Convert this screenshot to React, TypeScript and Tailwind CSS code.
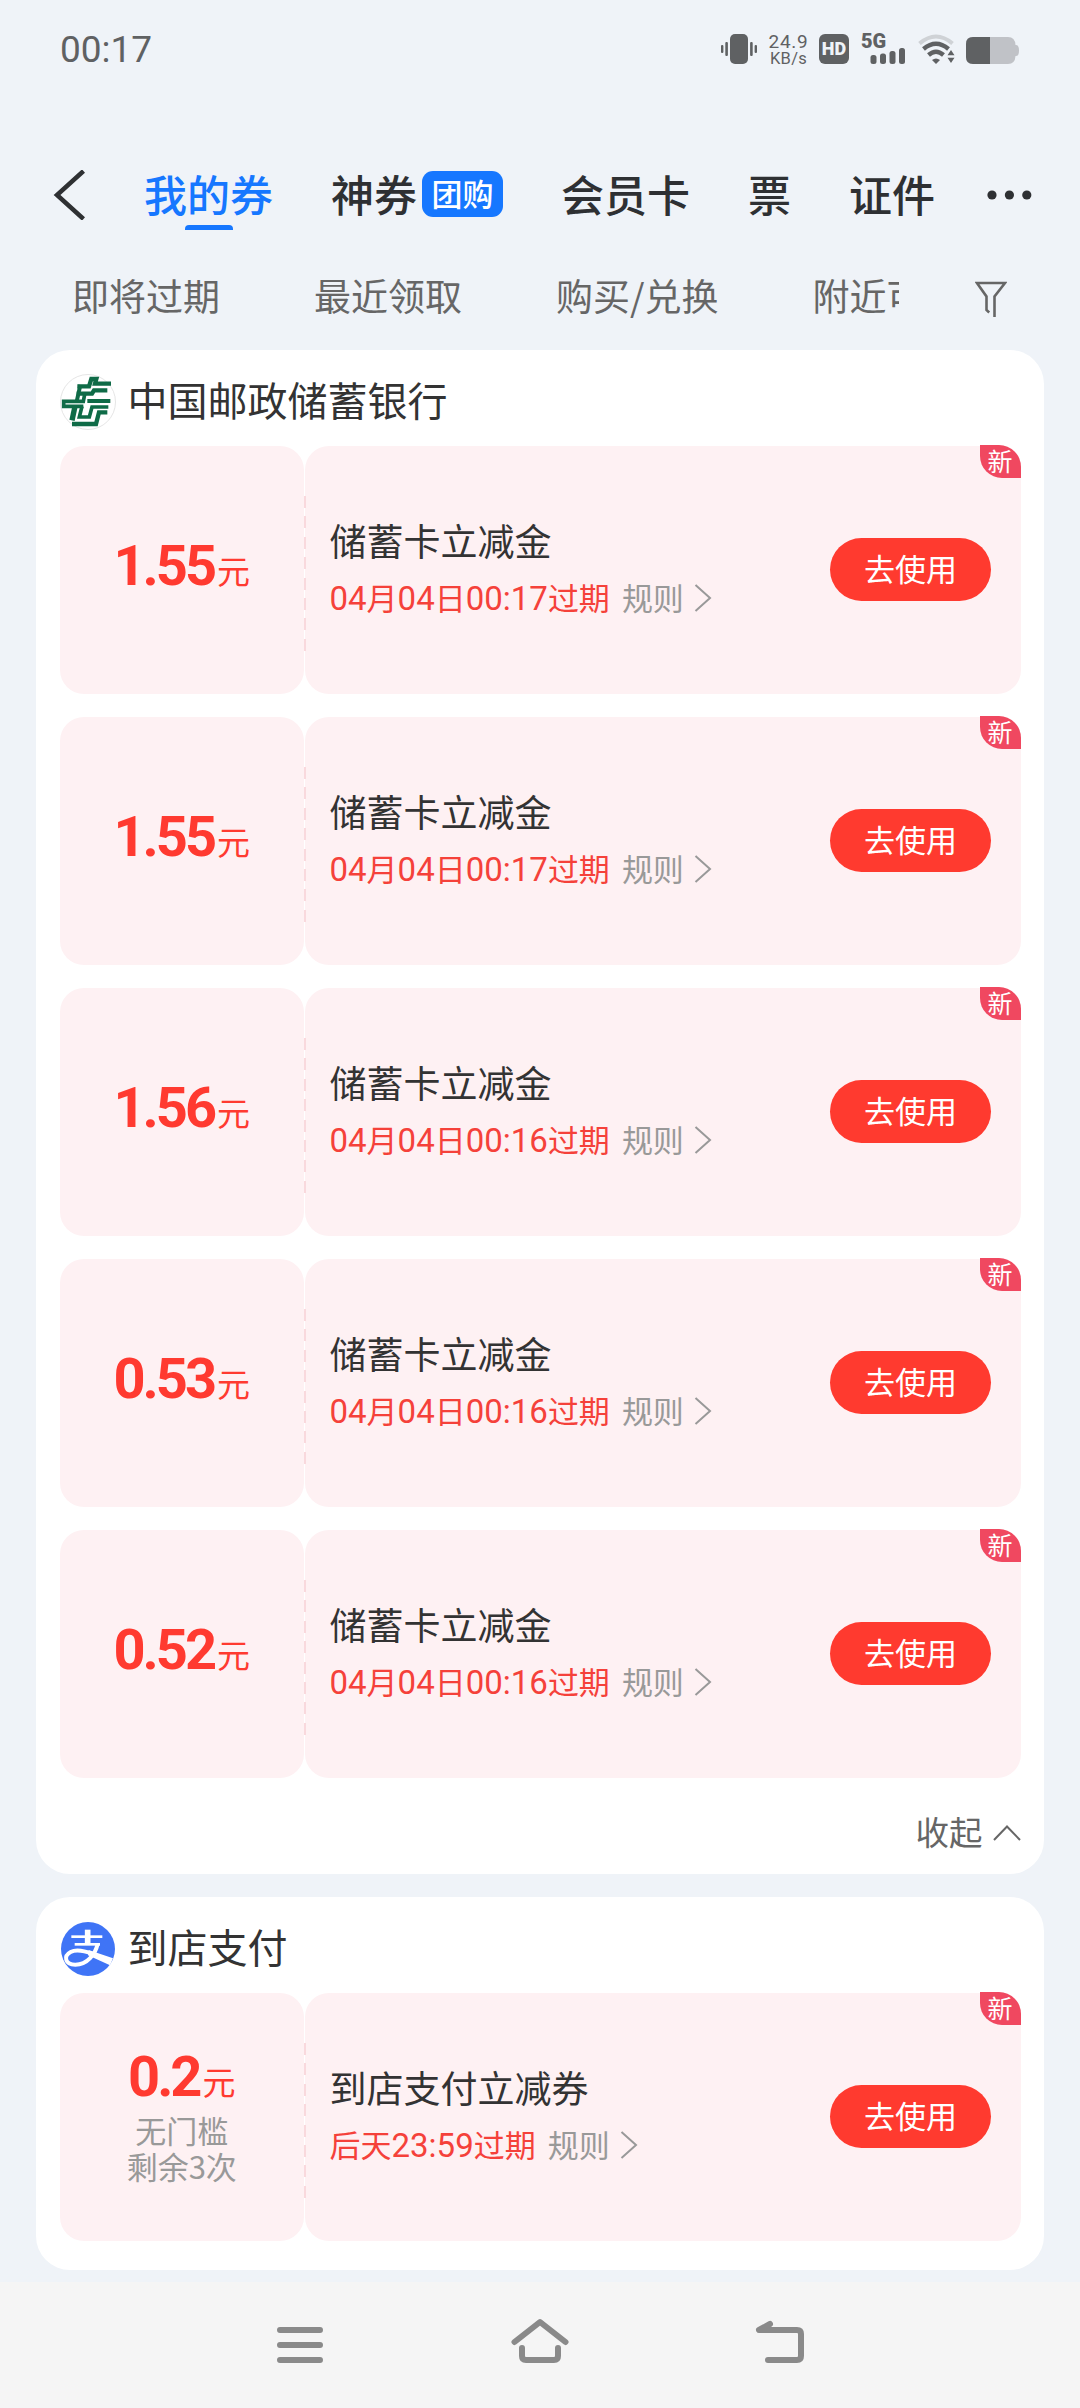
import React from 'react'

interface Coupon {
  id: number
  amount: string
  title: string
  expire: string
  notes?: string[]
}

const bankCoupons: Coupon[] = [
  { id: 1, amount: '1.55', title: '储蓄卡立减金', expire: '04月04日00:17过期' },
  { id: 2, amount: '1.55', title: '储蓄卡立减金', expire: '04月04日00:17过期' },
  { id: 3, amount: '1.56', title: '储蓄卡立减金', expire: '04月04日00:16过期' },
  { id: 4, amount: '0.53', title: '储蓄卡立减金', expire: '04月04日00:16过期' },
  { id: 5, amount: '0.52', title: '储蓄卡立减金', expire: '04月04日00:16过期' },
]

const storeCoupons: Coupon[] = [
  { id: 6, amount: '0.2', title: '到店支付立减券', expire: '后天23:59过期', notes: ['无门槛', '剩余3次'] },
]

function StatusBar() {
  return (
    <div className="flex h-[98px] items-center pl-[60px] pr-[61px] text-[#5f6163] font-['Roboto']">
      <span className="text-[37px] leading-none">00:17</span>
      <div className="ml-auto flex h-[30px] items-end">
        {/* Vibrate */}
        <svg width="36" height="30" viewBox="0 0 36 30" fill="currentColor">
          <rect x="9" width="18" height="30" rx="5" />
          <rect x="4.3" y="8" width="2.6" height="14" rx="1" />
          <rect x="29.1" y="8" width="2.6" height="14" rx="1" />
          <rect x="0" y="11" width="2.4" height="8" rx="1" />
          <rect x="33.6" y="11" width="2.4" height="8" rx="1" />
        </svg>
        <div className="ml-[11px] flex h-[34px] w-[41px] translate-y-[3px] flex-col items-center whitespace-nowrap">
          <span className="text-[19px] leading-[18px] tracking-[0.7px]">24.9</span>
          <span className="text-[16.5px] leading-[16px] tracking-[0.3px]">KB/s</span>
        </div>
        <div className="ml-[10px] flex h-[30px] w-[30px] items-center justify-center rounded-[6px] bg-[#5f6163] text-[18px] font-black leading-none text-[#eff3f8]">
          HD
        </div>
        <div className="relative ml-[12px] h-[30px] w-[45px]">
          <span className="absolute left-0 top-0 text-[20px] font-black leading-[14px]">5G</span>
          <svg className="absolute bottom-0 right-0" width="36" height="17" viewBox="0 0 36 17" fill="currentColor">
            <rect x="0.5" y="8" width="6" height="9" rx="2.5" />
            <rect x="10" y="6.5" width="6" height="10.5" rx="2.5" />
            <rect x="19.5" y="4" width="6" height="13" rx="2.5" />
            <rect x="29" y="1" width="6" height="16" rx="2.5" />
          </svg>
        </div>
        <svg className="ml-[12px]" width="37" height="30" viewBox="0 0 37 30" fill="none" stroke="currentColor">
          <path d="M1.5 9.5 Q18 -4.5 34.5 9.5" strokeWidth="4" stroke="#cfd2d6" />
          <path d="M5.5 15 Q18 4.5 30.5 15" strokeWidth="4.4" />
          <path d="M10.5 21 Q18 14.5 25.5 21" strokeWidth="4.4" />
          <path d="M14 26 Q18 23 22 26 L18 30 Z" fill="currentColor" stroke="none" />
          <path d="M33 16 L36.5 21.3 H29.5 Z M33 29 L36.5 23.7 H29.5 Z" fill="currentColor" stroke="none" />
        </svg>
        <svg className="ml-[11px]" width="53" height="27" viewBox="0 0 53 27">
          <path d="M7 0 H42 Q49 0 49.5 8 H50 Q53 8 53 13.5 T50 19 H49.5 Q49 27 42 27 H7 Q0 27 0 20 V7 Q0 0 7 0 Z" fill="#c0c2c7" />
          <path d="M7 0 H24 V27 H7 Q0 27 0 20 V7 Q0 0 7 0 Z" fill="#5f6163" />
        </svg>
      </div>
    </div>
  )
}

function TabBar() {
  return (
    <div className="flex h-[66px] items-center pl-[53px] text-[43px] font-medium leading-[62px] text-[#2e3033]">
      <svg width="32" height="50" viewBox="0 0 32 50" fill="none" stroke="#2e3033" strokeWidth="4.5">
        <path d="M30.5 1 L4 25 L30.5 49" />
      </svg>
      <div className="relative ml-[59px] pb-1 text-[#1677ff]">
        我的券
        <div className="absolute bottom-[-2px] left-[41px] h-[5px] w-[48px] rounded-t-[4px] bg-[#1677ff]" />
      </div>
      <div className="ml-[58px] flex items-center">
        <span className="pb-1">神券</span>
        <span className="-mt-[2px] ml-[5px] flex h-[46px] w-[81px] items-center justify-center rounded-[11px] bg-[#1677ff] pb-[3px] text-[31px] leading-[43px] text-white">
          团购
        </span>
      </div>
      <div className="ml-[58px] pb-1">会员卡</div>
      <div className="ml-[58px] pb-1">票</div>
      <div className="ml-[58px] pb-1">证件</div>
      <svg className="ml-[52px]" width="45" height="10" viewBox="0 0 45 10" fill="#2e3033">
        <circle cx="5" cy="5" r="4.6" />
        <circle cx="22.4" cy="5" r="4.6" />
        <circle cx="39.8" cy="5" r="4.6" />
      </svg>
    </div>
  )
}

function FilterBar() {
  return (
    <div className="mt-[34px] flex h-[67px] items-center text-[37px] leading-[67px] text-[#666]">
      <div className="flex w-[899px] gap-[94px] overflow-hidden whitespace-nowrap pl-[72px]">
        <span>即将过期</span>
        <span>最近领取</span>
        <span>购买/兑换</span>
        <span>附近可用</span>
      </div>
      <svg className="ml-[76px] mt-[7px]" width="32" height="38" viewBox="0 0 32 38" fill="none" stroke="#666" strokeWidth="2.6">
        <path d="M14.2 32.5 L11.5 30 V16.5 L2 3 H30 L19.5 16.5 V37" />
      </svg>
    </div>
  )
}

function PostBankLogo() {
  return (
    <svg width="56" height="56" viewBox="10 9 168 168">
      <circle cx="94" cy="93" r="82.5" fill="#fff" stroke="#d8d8d8" strokeWidth="2" />
      <g fill="none" stroke="#0f6b47" strokeWidth="13">
        <path d="M62 46 H97 L104 24 H119 L115 38 H163" />
        <path d="M71 42 L60 92" strokeWidth="12" />
        <path d="M60 68 H106 L112 58 H152" />
        <path d="M84 70 L80 91 H21 V106 H80" strokeWidth="11" />
        <path d="M55 106 L46 148" strokeWidth="16" />
        <path d="M76 106 L68 138 H98 L106 108 H155" strokeWidth="11" />
        <path d="M92 90 H161" strokeWidth="12" />
        <path d="M46 159 H118 L127 124 H152" />
      </g>
    </svg>
  )
}

function AlipayLogo() {
  return (
    <svg width="56" height="56" viewBox="10 9 168 168">
      <circle cx="94" cy="93" r="81" fill="#3f74f6" />
      <g fill="none" stroke="#fff">
        <path d="M44 56 H137" strokeWidth="8" />
        <path d="M54 79 H130" strokeWidth="8" />
        <path d="M93 35 V79" strokeWidth="17" />
        <path d="M123 78 C116 108 92 140 56 140 C24 140 20 114 42 102 C58 94 84 99 108 108" strokeWidth="12" />
      </g>
      <path d="M96 96 L169 121 L160 142 L94 112 Z" fill="#fff" />
    </svg>
  )
}

function CouponCard({ coupon }: { coupon: Coupon }) {
  // Latin digits sit a little larger than the Chinese characters around them
  const parts = coupon.expire.split(/([\d:]+)/)

  return (
    <div className="relative flex h-[247.5px] gap-px">
      <div className="flex w-[244.5px] flex-col items-center justify-center rounded-[24px] bg-[#fef1f3]">
        <div className="flex h-[65px] items-baseline text-[#ff3a30]">
          <span className="text-[56px] font-bold leading-[58px] tracking-[-3px] font-['Roboto']">{coupon.amount}</span>
          <span className="ml-[3px] text-[33px] leading-none -translate-y-px">元</span>
        </div>
        {coupon.notes?.map((note) => (
          <div key={note} className="-translate-y-px text-[31px] leading-[36px] text-[#999]">{note}</div>
        ))}
      </div>

      <div className="flex flex-1 items-center rounded-[24px] bg-[#fef1f3] pl-[24.5px] pr-[29.5px]">
        <div className="flex flex-1 flex-col">
          <div className="h-[57px] text-[37px] leading-[55px] text-[#333]">{coupon.title}</div>
          <div className="flex h-[57px] items-center text-[31px] leading-[57px] text-[#999]">
            <span className="-mt-[2px] text-[#f5413a]">
              {parts.map((part, i) =>
                /\d/.test(part) ? <span key={i} className="text-[33px] font-['Roboto']">{part}</span> : part
              )}
            </span>
            <span className="-mt-[3px] ml-[12px]">规则</span>
            <svg className="ml-[10px]" width="18" height="28" viewBox="0 0 18 28" fill="none" stroke="#999" strokeWidth="2">
              <path d="M1.5 1 L16 14 L1.5 27" />
            </svg>
          </div>
        </div>
        <button className="h-[63px] w-[161px] rounded-full bg-[#ff3a2f] pb-[3px] text-[31px] leading-[60px] text-white">去使用</button>
      </div>

      <div className="absolute left-[244px] top-[50px] h-[155px] w-[2px] bg-[repeating-linear-gradient(to_bottom,#f9d9dd_0,#f9d9dd_12px,transparent_12px,transparent_20.4px)]" />
      <div className="absolute -top-px right-0 flex h-[33px] w-[41px] items-center justify-center rounded-bl-[22px] rounded-tr-[22px] bg-[#f04860] pb-[2px] text-[25px] leading-[31px] text-white">
        新
      </div>
    </div>
  )
}

interface SectionProps {
  logo: React.ReactNode
  name: string
  coupons: Coupon[]
  collapsible?: boolean
}

function CouponSection({ logo, name, coupons, collapsible }: SectionProps) {
  return (
    <section className="rounded-[34px] bg-white px-[23.5px]">
      <div className="flex h-[96px] items-center gap-[12px] pt-[7px] text-[40px] leading-[60px] text-[#333]">
        {logo}
        <span className="-mt-[5px]">{name}</span>
      </div>
      <div className="flex flex-col gap-[23.5px]">
        {coupons.map((coupon) => (
          <CouponCard key={coupon.id} coupon={coupon} />
        ))}
      </div>
      {collapsible ? (
        <div className="flex h-[96.5px] items-center justify-end pt-[14px] text-[33.5px] leading-[50px] text-[#666]">
          <span className="-mt-[3px]">收起</span>
          <svg className="ml-[10px]" width="28" height="16" viewBox="0 0 28 16" fill="none" stroke="#666" strokeWidth="2">
            <path d="M1 15 L14 1.5 L27 15" />
          </svg>
        </div>
      ) : (
        <div className="h-[29.5px]" />
      )}
    </section>
  )
}

function NavigationBar() {
  return (
    <nav className="flex h-[126px] items-center justify-between bg-[#f5f5f5] px-[272px] pb-[2px] text-[#8a8a8a]">
      <svg width="56" height="56" viewBox="272 2316 56 56" fill="none" stroke="currentColor" strokeWidth="6" strokeLinecap="round">
        <path d="M280 2330 H320 M280 2345 H320 M280 2360 H320" />
      </svg>
      <svg width="62" height="56" viewBox="509 2316 62 56" fill="none" stroke="currentColor" strokeWidth="6" strokeLinecap="round" strokeLinejoin="round">
        <path d="M514.5 2342 L540 2322 L565.5 2342" />
        <path d="M522 2348 V2356 Q522 2360 526 2360 H554 Q558 2360 558 2356 V2348" />
      </svg>
      <svg width="56" height="56" viewBox="752 2316 56 56" fill="none" stroke="currentColor" strokeWidth="6" strokeLinecap="round" strokeLinejoin="round">
        <path d="M770 2324 L759 2330 H797 Q801 2330 801 2334 V2356 Q801 2360 797 2360 H768" />
      </svg>
    </nav>
  )
}

export default function App() {
  return (
    <div className="flex h-[2408px] w-[1080px] flex-col overflow-hidden bg-[#eff3f8] font-['Noto_Sans_CJK_SC',sans-serif]">
      <StatusBar />
      <div className="mt-[64px]">
        <TabBar />
        <FilterBar />
      </div>
      <main className="mt-[21px] flex flex-1 flex-col gap-[23px] px-[36px]">
        <CouponSection logo={<PostBankLogo />} name="中国邮政储蓄银行" coupons={bankCoupons} collapsible />
        <CouponSection logo={<AlipayLogo />} name="到店支付" coupons={storeCoupons} />
      </main>
      <NavigationBar />
    </div>
  )
}
